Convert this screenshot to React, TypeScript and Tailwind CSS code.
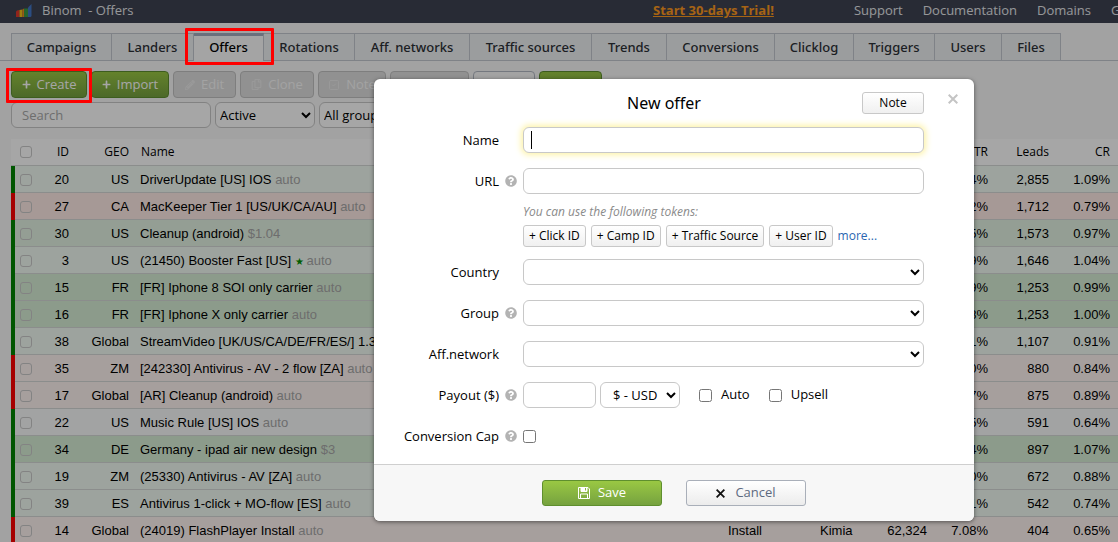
import type { ReactNode } from "react";
import { FaCog, FaPencilAlt, FaPlus, FaQuestionCircle, FaRegCopy, FaTimes, FaTrash } from "react-icons/fa";
import { LuSquareCheck } from "react-icons/lu";

type Tone = "mint" | "green" | "grass" | "pink" | "rose" | "plain";

interface Offer {
  id: number;
  geo: string;
  name: string;
  payout: string;
  starred?: boolean;
  up: boolean;
  tone: Tone;
  type?: string;
  network?: string;
  clicks?: string;
  ctr: string;
  leads: string;
  cr: string;
}

const TONES: Record<Tone, string> = {
  mint: "bg-[#f2fbf3]",
  green: "bg-[#e4f3e3]",
  grass: "bg-[#d8efd6]",
  pink: "bg-[#fff5f2]",
  rose: "bg-[#ffebe6]",
  plain: "bg-[#f9fbfb]",
};

const TABS = [
  { name: "Campaigns", width: "w-[101px]" },
  { name: "Landers", width: "w-[82px]" },
  { name: "Offers", width: "w-[70px]" },
  { name: "Rotations", width: "w-[91px]" },
  { name: "Aff. networks", width: "w-[115px]" },
  { name: "Traffic sources", width: "w-[122px]" },
  { name: "Trends", width: "w-[75px]" },
  { name: "Conversions", width: "w-[108px]" },
  { name: "Clicklog", width: "w-[79px]" },
  { name: "Triggers", width: "w-[81px]" },
  { name: "Users", width: "w-[67px]" },
  { name: "Files", width: "w-[59px]" },
];

const OFFERS: Offer[] = [
  { id: 20, geo: "US", name: "DriverUpdate [US] IOS", payout: "auto", up: true, tone: "mint", ctr: "7.04%", leads: "2,855", cr: "1.09%" },
  { id: 27, geo: "CA", name: "MacKeeper Tier 1 [US/UK/CA/AU]", payout: "auto", up: false, tone: "rose", ctr: "7.02%", leads: "1,712", cr: "0.79%" },
  { id: 30, geo: "US", name: "Cleanup (android)", payout: "$1.04", up: true, tone: "green", ctr: "7.05%", leads: "1,573", cr: "0.97%" },
  { id: 3, geo: "US", name: "(21450) Booster Fast [US]", payout: "auto", starred: true, up: true, tone: "mint", ctr: "7.09%", leads: "1,646", cr: "1.04%" },
  { id: 15, geo: "FR", name: "[FR] Iphone 8 SOI only carrier", payout: "auto", up: true, tone: "grass", ctr: "7.09%", leads: "1,253", cr: "0.99%" },
  { id: 16, geo: "FR", name: "[FR] Iphone X only carrier", payout: "auto", up: true, tone: "grass", ctr: "7.08%", leads: "1,253", cr: "1.00%" },
  { id: 38, geo: "Global", name: "StreamVideo [UK/US/CA/DE/FR/ES/] 1.3", payout: "auto", up: true, tone: "mint", ctr: "7.01%", leads: "1,107", cr: "0.91%" },
  { id: 35, geo: "ZM", name: "[242330] Antivirus - AV - 2 flow [ZA]", payout: "auto", up: false, tone: "pink", ctr: "7.00%", leads: "880", cr: "0.84%" },
  { id: 17, geo: "Global", name: "[AR] Cleanup (android)", payout: "auto", up: false, tone: "pink", ctr: "7.07%", leads: "875", cr: "0.89%" },
  { id: 22, geo: "US", name: "Music Rule [US] IOS", payout: "auto", up: true, tone: "plain", ctr: "7.05%", leads: "591", cr: "0.64%" },
  { id: 34, geo: "DE", name: "Germany - ipad air new design", payout: "$3", up: true, tone: "grass", ctr: "7.04%", leads: "897", cr: "1.07%" },
  { id: 19, geo: "ZM", name: "(25330) Antivirus - AV [ZA]", payout: "auto", up: true, tone: "mint", ctr: "7.00%", leads: "672", cr: "0.88%" },
  { id: 39, geo: "ES", name: "Antivirus 1-click + MO-flow [ES]", payout: "auto", up: true, tone: "mint", ctr: "7.01%", leads: "542", cr: "0.74%" },
  { id: 14, geo: "Global", name: "(24019) FlashPlayer Install", payout: "auto", up: false, tone: "pink", type: "Install", network: "Kimia", clicks: "62,324", ctr: "7.08%", leads: "404", cr: "0.65%" },
];

const TOKENS = ["+ Click ID", "+ Camp ID", "+ Traffic Source", "+ User ID"];

const field = "h-[26px] rounded-md border border-[#c8c8c8] bg-white outline-none";
const toolBtn = "flex h-[27px] shrink-0 items-center justify-center rounded border";
const greenBtn = "border-[#5f8f2e] bg-linear-to-b from-[#9ac843] to-[#76a23f] text-white";
const mutedBtn = "border-[#c2c2c2] bg-[#dfdfdf] text-[#fafafa]";

function Logo() {
  return (
    <svg width="16" height="14" viewBox="0 0 16 14" aria-hidden="true">
      <path d="M0 8q0-1 1-1.500L3.500 6v7H0z" fill="#e0382c" />
      <path d="M3.500 6L6.500 5.500V13h-3z" fill="#f5c216" />
      <path d="M6.500 5.500L8 4.500V13H6.500z" fill="#f08a1c" />
      <path d="M8 4.500h4V13H8z" fill="#3d9c45" />
      <path d="M12 3.500L15.500 0v11.500q0 1.500-1.500 1.500h-2z" fill="#4377c8" />
    </svg>
  );
}

function FloppyIcon() {
  return (
    <svg width="12" height="12" viewBox="0 0 12 12" fill="none" stroke="currentColor" aria-hidden="true">
      <path d="M.5.5h9.500l1.500 1.500v9.500H.5z" />
      <path d="M3 .5h6v4H3z" fill="currentColor" />
      <path d="M7.500 1v2.500" stroke="#8db842" />
      <path d="M2.500 11V7h7v4" />
    </svg>
  );
}

function Header() {
  return (
    <header className="flex h-[23px] items-center bg-[#3e4352] pb-0.5 text-[13px] text-[#e6e8ec]">
      <div className="flex w-[653px] shrink-0 items-center gap-[10px] pl-4">
        <Logo />
        <span>Binom &nbsp;- Offers</span>
      </div>
      <a href="#trial" className="shrink-0 font-bold text-[#ff9a1f] underline">
        Start 30-days Trial!
      </a>
      <nav className="ml-20 flex shrink-0 gap-5">
        <a href="#support">Support</a>
        <a href="#docs">Documentation</a>
        <a href="#domains">Domains</a>
        <a href="#guides">Guides</a>
      </nav>
    </header>
  );
}

function Tabs() {
  return (
    <nav className="flex border-b border-[#c3c8d0] pt-[10px] pl-[11px] text-center font-['Noto_Sans','Open_Sans',sans-serif] text-[13px] font-medium text-[#2c3036]">
      {TABS.map(({ name, width }) => (
        <a
          key={name}
          href={`#${name}`}
          className={
            name === "Offers"
              ? `${width} -mb-px h-7 shrink-0 border-t-3 border-r border-[#c3c8d0] border-t-[#a3adbf] bg-[#fcfcfc] leading-[23px] text-black`
              : `${width} h-[27px] shrink-0 border-t border-r border-[#c3c8d0] bg-[#eff1f3] leading-[27px] first:border-l`
          }
        >
          {name}
        </a>
      ))}
    </nav>
  );
}

function Toolbar() {
  return (
    <div className="px-[11px] text-[13px]">
      <div className="mt-[10px] flex gap-1 font-medium">
        <button className={`${toolBtn} ${greenBtn} w-[76px] gap-1.5`}>
          <FaPlus size={9} />
          Create
        </button>
        <button className={`${toolBtn} ${greenBtn} w-[78px] gap-1.5`}>
          <FaPlus size={9} />
          Import
        </button>
        <button className={`${toolBtn} ${mutedBtn} w-[63px] gap-1.5`}>
          <FaPencilAlt size={10} className="text-[#ececec]" />
          Edit
        </button>
        <button className={`${toolBtn} ${mutedBtn} w-[74px] gap-1.5`}>
          <FaRegCopy size={11} className="text-[#ececec]" />
          Clone
        </button>
        <button className={`${toolBtn} ${mutedBtn} w-[68px] gap-1.5`}>
          <LuSquareCheck size={12} className="text-[#ececec]" />
          Note
        </button>
        <button className={`${toolBtn} ${mutedBtn} w-[79px] gap-1.5`}>
          <FaTrash size={12} />
          Delete
        </button>
        <button className={`${toolBtn} w-[62px] gap-1.5 border-[#b3b9c4] bg-[#fbfbfb]`}>
          <FaCog size={12} />
          Set
        </button>
        <button className={`${toolBtn} ${greenBtn} w-[63px] gap-1.5`}>
          <FloppyIcon />
          Save
        </button>
      </div>
      <div className="mt-1 flex gap-1">
        <input
          aria-label="Search"
          placeholder="Search"
          className={`${field} w-[200px] px-2.5 placeholder:text-[#a9a9a9]`}
        />
        <select aria-label="Status" className={`${field} w-[100px]`}>
          <option>Active</option>
        </select>
        <select aria-label="Group filter" className={`${field} w-[120px]`}>
          <option>All groups</option>
        </select>
      </div>
    </div>
  );
}

function RowCheckbox({ label }: { label: string }) {
  return (
    <input
      type="checkbox"
      aria-label={label}
      className="block size-3 appearance-none rounded-[3px] border border-[#c9c9c9]"
    />
  );
}

function OffersTable() {
  const cell = "h-[27px] border-b border-[#d6d9d8] whitespace-nowrap";
  return (
    <div className="mt-[11px] overflow-hidden pl-[11px]">
      <table className="w-full table-fixed border-separate border-spacing-0 bg-white text-[13px] text-black">
        <colgroup>
          <col className="w-1" />
          <col className="w-[22px]" />
          <col className="w-10" />
          <col className="w-[60px]" />
          <col />
          <col className="w-[92px]" />
          <col className="w-[58px]" />
          <col className="w-[65px]" />
          <col className="w-[61px]" />
          <col className="w-[61px]" />
          <col className="w-[61px]" />
        </colgroup>
        <thead>
          <tr className="text-[12px] [&>th]:font-medium">
            <th className={cell} />
            <th className={`${cell} pl-[5px]`}>
              <RowCheckbox label="Select all" />
            </th>
            <th className={`${cell} pr-2 text-right`}>ID</th>
            <th className={`${cell} pr-2 text-right`}>GEO</th>
            <th className={`${cell} pl-1 text-left`}>Name</th>
            <th className={`${cell} pl-2 text-left`}>Type</th>
            <th className={`${cell} pl-2 text-left`}>Network</th>
            <th className={`${cell} pr-2 text-right`}>Clicks</th>
            <th className={`${cell} pr-2 text-right`}>LP CTR</th>
            <th className={`${cell} pr-2 text-right`}>Leads</th>
            <th className={`${cell} pr-2 text-right`}>CR</th>
          </tr>
        </thead>
        <tbody className="font-['Liberation_Sans',Arial,sans-serif] [&_td]:pt-0.5">
          {OFFERS.map((offer) => (
            <tr key={offer.id} className={TONES[offer.tone]}>
              <td className={offer.up ? "bg-[#008500]" : "bg-[#ff0000]"} />
              <td className={`${cell} pl-[5px]`}>
                <RowCheckbox label={`Select offer ${offer.id}`} />
              </td>
              <td className={`${cell} pr-2 text-right`}>{offer.id}</td>
              <td className={`${cell} pr-2 text-right`}>{offer.geo}</td>
              <td className={`${cell} overflow-hidden pl-[3px]`}>
                {offer.name} {offer.starred && <span className="text-[10px] leading-3 text-[#009000]">★ </span>}
                <span className="text-[#a8a8a8]">{offer.payout}</span>
              </td>
              <td className={`${cell} pl-2`}>{offer.type}</td>
              <td className={`${cell} pl-2`}>{offer.network}</td>
              <td className={`${cell} pr-2 text-right`}>{offer.clicks}</td>
              <td className={`${cell} pr-2 text-right`}>{offer.ctr}</td>
              <td className={`${cell} pr-2 text-right`}>{offer.leads}</td>
              <td className={`${cell} pr-2 text-right`}>{offer.cr}</td>
            </tr>
          ))}
        </tbody>
      </table>
    </div>
  );
}

interface FormRowProps {
  id: string;
  label: string;
  help?: boolean;
  children: ReactNode;
}

function FormRow({ id, label, help, children }: FormRowProps) {
  return (
    <div className="flex gap-1.5">
      <label htmlFor={id} className="h-[26px] w-[125px] text-right leading-[26px]">
        {label}
      </label>
      <span className="flex h-[26px] w-3 items-center text-[#b3b3b3]">
        {help && <FaQuestionCircle size={12} />}
      </span>
      <div className="min-w-0 flex-1">{children}</div>
    </div>
  );
}

function NewOfferDialog() {
  return (
    <div
      role="dialog"
      aria-labelledby="dialog-title"
      className="absolute top-[79px] left-[374px] w-[600px] overflow-hidden rounded-md bg-white text-[13px] text-black shadow-[0_1px_4px_rgba(0,0,0,0.5)]"
    >
      <div className="grid h-12 grid-cols-[1fr_auto_1fr] items-center pr-4">
        <h2 id="dialog-title" className="col-start-2 mr-1 font-['Noto_Sans','Open_Sans',sans-serif] text-base">
          New offer
        </h2>
        <div className="flex items-center justify-end gap-6">
          <button className="h-[22px] w-[62px] rounded-[3px] border border-[#c8c8c8] bg-linear-to-b from-white to-[#f0f0f0] text-[12px]">
            Note
          </button>
          <button aria-label="Close" className="pb-2 text-[#c4c4c4]">
            <FaTimesThin size={10} />
          </button>
        </div>
      </div>

      <form className="flex flex-col gap-[15px] pr-[50px] pb-[15px]">
        <FormRow id="name" label="Name">
          <div className="relative">
            <input id="name" className={`${field} block w-full px-2 shadow-[0_0_6px_2px_#fdf3a8]`} />
            <span className="absolute top-1 left-2 h-[18px] w-px bg-black" />
          </div>
        </FormRow>

        <FormRow id="url" label="URL" help>
          <input id="url" className={`${field} block w-full px-2`} />
          <p className="mt-[9px] h-[18px] text-[12px] leading-[18px] text-[#8a8a8a] italic">
            You can use the following tokens:
          </p>
          <div className="mt-1 -mb-[3px] flex items-center gap-[5px] text-[12px]">
            {TOKENS.map((token) => (
              <button
                key={token}
                type="button"
                className="h-[22px] shrink-0 rounded-[3px] border border-[#c8c8c8] bg-linear-to-b from-white to-[#f0f0f0] px-[5px] whitespace-nowrap"
              >
                {token}
              </button>
            ))}
            <a href="#tokens" className="text-[#2a66b1]">
              more...
            </a>
          </div>
        </FormRow>

        <FormRow id="country" label="Country">
          <select id="country" className={`${field} block w-full`} />
        </FormRow>

        <FormRow id="group" label="Group" help>
          <select id="group" className={`${field} block w-full`} />
        </FormRow>

        <FormRow id="network" label="Aff.network">
          <select id="network" className={`${field} block w-full`} />
        </FormRow>

        <FormRow id="payout" label="Payout ($)" help>
          <div className="flex items-center">
            <input id="payout" className={`${field} w-[73px] px-2`} />
            <select aria-label="Currency" className={`${field} ml-1 w-20 pl-2`}>
              <option>$ - USD</option>
            </select>
            <label className="ml-[19px] flex items-center gap-[9px]">
              <input type="checkbox" className="size-[13px]" />
              Auto
            </label>
            <label className="ml-[19px] flex items-center gap-[9px]">
              <input type="checkbox" className="size-[13px]" />
              Upsell
            </label>
          </div>
        </FormRow>

        <FormRow id="cap" label="Conversion Cap" help>
          <div className="flex h-[26px] items-center">
            <input id="cap" type="checkbox" className="size-[13px]" />
          </div>
        </FormRow>
      </form>

      <div className="flex h-[57px] justify-center gap-6 border-t border-[#cfcfcf] bg-[#f7f7f7] pt-[15px]">
        <button className={`${greenBtn} flex h-[26px] w-[120px] items-center justify-center gap-2 rounded-[3px] border`}>
          <FloppyIcon />
          Save
        </button>
        <button className="flex h-[26px] w-[120px] items-center justify-center gap-2.5 rounded-[3px] border border-[#a9afb9] bg-linear-to-b from-white to-[#ececec] text-[#5d6a80]">
          <FaTimesThin size={9} className="text-[#111]" />
          Cancel
        </button>
      </div>
    </div>
  );
}

function FaTimesThin({ size, className }: { size: number; className?: string }) {
  return (
    <svg
      width={size}
      height={size}
      viewBox="0 0 10 10"
      stroke="currentColor"
      strokeWidth="2"
      className={className}
      aria-hidden="true"
    >
      <path d="M.7.7l8.600 8.600M9.300.7L.7 9.300" />
    </svg>
  );
}

export default function App() {
  return (
    <div className="relative h-screen overflow-hidden bg-[#f9f9f9] font-['Open_Sans','Noto_Sans',sans-serif]">
      <Header />
      <Tabs />
      <Toolbar />
      <OffersTable />

      <div className="absolute inset-0 bg-black/35" />
      <NewOfferDialog />

      {/* Highlights around the Offers tab and the Create button */}
      <div className="absolute top-7 left-[185px] h-[37px] w-[89px] rounded-[1px] border-3 border-[#fe0000]" />
      <div className="absolute top-[68px] left-1.5 h-[35px] w-[86px] rounded-[1px] border-3 border-[#fe0000]" />
    </div>
  );
}
